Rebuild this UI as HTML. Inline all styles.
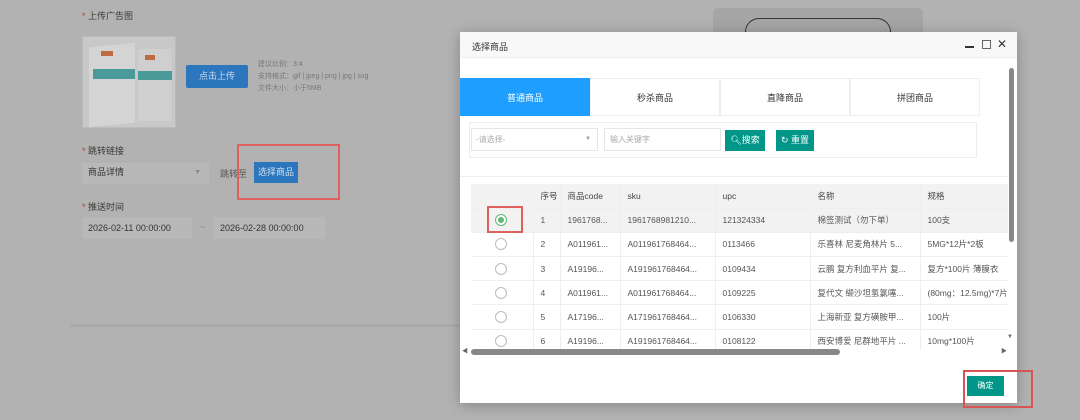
<!DOCTYPE html>
<html><head><meta charset="utf-8"><style>
*{box-sizing:border-box;margin:0;padding:0}
body{width:1080px;height:420px;overflow:hidden;background:#b2b2b2;font-family:"Liberation Sans","Noto Sans CJK SC",sans-serif;position:relative;font-size:9px;color:#333}
.a{position:absolute}
.t{color:#3a3a3a;font-size:9px}
.st{color:#c0392b}
.dlg{left:460px;top:32px;width:557px;height:371px;background:#fff;box-shadow:0 2px 12px rgba(0,0,0,.25)}
.tab{top:46px;height:38px;line-height:38px;text-align:center;border:1px solid #eee;font-size:9px;color:#333;width:130px}
table{border-collapse:collapse;font-size:8.5px;color:#555;table-layout:fixed}
td,th{height:24.2px;border-bottom:1px solid #eee;border-right:1px solid #eee;padding-left:7px;font-weight:normal;text-align:left;white-space:nowrap;overflow:hidden}
th{background:#f2f2f2;color:#444}
.r{width:12px;height:12px;border:1px solid #bbb;border-radius:50%;margin-left:17px;background:#fff}
</style></head><body>
<div class="a t" style="left:82px;top:9px"><span class="st">*</span> 上传广告图</div>
<div class="a" style="left:82px;top:36px;width:94px;height:92px;background:#c8c8c8;border:1px solid #bbb">
 <div class="a" style="left:6px;top:8px;width:46px;height:80px;background:#d4d4d4;transform:skewY(-6deg)"></div>
 <div class="a" style="left:10px;top:32px;width:42px;height:10px;background:#4a9a9a"></div>
 <div class="a" style="left:55px;top:12px;width:34px;height:72px;background:#cfcfcf"></div>
 <div class="a" style="left:55px;top:34px;width:34px;height:9px;background:#4a9a9a"></div>
 <div class="a" style="left:18px;top:14px;width:12px;height:5px;background:#c06a40"></div>
 <div class="a" style="left:62px;top:18px;width:10px;height:5px;background:#c06a40"></div>
</div>
<div class="a" style="left:186px;top:65px;width:62px;height:23px;background:#2b76bd;color:#ccdcec;border-radius:2px;text-align:center;line-height:23px;font-size:9px">点击上传</div>
<div class="a" style="left:258px;top:59px;color:#777;font-size:7px;line-height:12px">建议比例：3:4<br>支持格式：gif | jpeg | png | jpg | svg<br>文件大小：小于5MB</div>
<div class="a t" style="left:82px;top:144px"><span class="st">*</span> 跳转链接</div>
<div class="a" style="left:82px;top:163px;width:127px;height:21px;background:#b8b8b8;color:#333;font-size:9px;padding-left:6px;line-height:19px">商品详情<span style="position:absolute;right:8px;color:#888;font-size:7px">▼</span></div>
<div class="a" style="left:220px;top:167px;color:#555;font-size:9px">跳转至</div>
<div class="a" style="left:254px;top:162px;width:44px;height:21px;background:#2b76bd;color:#d0e0f0;line-height:21px;text-align:center;font-size:9px">选择商品</div>
<div class="a" style="left:237px;top:144px;width:103px;height:56px;border:2px solid #e06060"></div>
<div class="a t" style="left:82px;top:200px"><span class="st">*</span> 推送时间</div>
<div class="a" style="left:82px;top:217px;width:110px;height:22px;background:#b8b8b8;font-size:9px;color:#333;line-height:22px;padding-left:6px">2026-02-11 00:00:00</div>
<div class="a" style="left:200px;top:222px;color:#888">~</div>
<div class="a" style="left:213px;top:217px;width:112px;height:22px;background:#b8b8b8;font-size:9px;color:#333;line-height:22px;padding-left:7px">2026-02-28 00:00:00</div>
<div class="a" style="left:70px;top:324px;width:400px;height:3px;background:#aaa"></div>
<div class="a" style="left:713px;top:8px;width:210px;height:30px;background:#a5a5a5;border-radius:6px"></div>
<div class="a" style="left:745px;top:18px;width:146px;height:30px;border:1.5px solid #333;border-radius:14px"></div>
<div class="a dlg">
 <div class="a" style="left:0;top:0;width:557px;height:26px;background:#f8f8f8;border-bottom:1px solid #eee"></div>
 <div class="a" style="left:12px;top:8px;font-size:9px;color:#333">选择商品</div>
 <div class="a" style="left:505px;top:14px;width:9px;height:1.5px;background:#333"></div>
 <div class="a" style="left:522px;top:8px;width:9px;height:9px;border:1px solid #666"></div>
 <div class="a" style="left:537px;top:5px;font-size:12px;color:#333">✕</div>
 <div class="a tab" style="left:0;background:#1e9fff;color:#fff;border-color:#1e9fff">普通商品</div>
 <div class="a tab" style="left:130px">秒杀商品</div>
 <div class="a tab" style="left:260px">直降商品</div>
 <div class="a tab" style="left:390px">拼团商品</div>
 <div class="a" style="left:9px;top:90px;width:508px;height:36px;border:1px solid #eee"></div>
 <div class="a" style="left:11px;top:96px;width:127px;height:23px;border:1px solid #e6e6e6;color:#aaa;font-size:8px;line-height:21px;padding-left:4px">-请选择-<span style="position:absolute;right:6px;color:#999;font-size:6px">▼</span></div>
 <div class="a" style="left:144px;top:96px;width:117px;height:23px;border:1px solid #e6e6e6;color:#aaa;font-size:8px;line-height:21px;padding-left:5px">输入关键字</div>
 <div class="a" style="left:265px;top:98px;width:40px;height:21px;background:#009688;color:#fff;font-size:9px;line-height:21px;text-align:center">&#x1F50D;&#xFE0E;搜索</div>
 <div class="a" style="left:316px;top:98px;width:38px;height:21px;background:#009688;color:#fff;font-size:9px;line-height:21px;text-align:center">↻ 重置</div>
 <div class="a" style="left:0;top:144px;width:548px;height:1px;background:#eee"></div>
 <div class="a" style="left:11px;top:152px;width:537px;height:166px;overflow:hidden">
 <table style="width:560px">
  <colgroup><col style="width:62px"><col style="width:27px"><col style="width:60px"><col style="width:95px"><col style="width:95px"><col style="width:110px"><col style="width:111px"></colgroup>
  <tr><th></th><th>序号</th><th>商品code</th><th>sku</th><th>upc</th><th>名称</th><th>规格</th></tr>
  <tr style="background:#f2f2f2"><td><div class="r" style="border-color:#5fb878;display:flex;align-items:center;justify-content:center"><div style="width:6px;height:6px;border-radius:50%;background:#5fb878"></div></div></td><td>1</td><td>1961768...</td><td>1961768981210...</td><td>121324334</td><td>棉签测试（勿下单）</td><td>100支</td></tr>
  <tr><td><div class="r"></div></td><td>2</td><td>A011961...</td><td>A011961768464...</td><td>0113466</td><td>乐喜林 尼麦角林片 5...</td><td>5MG*12片*2板</td></tr>
  <tr><td><div class="r"></div></td><td>3</td><td>A19196...</td><td>A191961768464...</td><td>0109434</td><td>云鹏 复方利血平片 复...</td><td>复方*100片 薄膜衣</td></tr>
  <tr><td><div class="r"></div></td><td>4</td><td>A011961...</td><td>A011961768464...</td><td>0109225</td><td>复代文 缬沙坦氢氯噻...</td><td>(80mg：12.5mg)*7片</td></tr>
  <tr><td><div class="r"></div></td><td>5</td><td>A17196...</td><td>A171961768464...</td><td>0106330</td><td>上海新亚 复方磺胺甲...</td><td>100片</td></tr>
  <tr><td><div class="r"></div></td><td>6</td><td>A19196...</td><td>A191961768464...</td><td>0108122</td><td>西安博爱 尼群地平片 ...</td><td>10mg*100片</td></tr>
 </table></div>
 <div class="a" style="left:11px;top:317px;width:369px;height:6px;background:#888;border-radius:3px"></div>
 <div class="a" style="left:2px;top:314px;font-size:6px;color:#666">◀</div>
 <div class="a" style="left:541px;top:314px;font-size:6px;color:#666">▶</div>
 <div class="a" style="left:549px;top:36px;width:5px;height:174px;background:#888;border-radius:3px"></div>
 <div class="a" style="left:547px;top:302px;font-size:6px;color:#666">▼</div>
 <div class="a" style="left:507px;top:344px;width:37px;height:20px;background:#009688;color:#fff;font-size:8px;line-height:20px;text-align:center">确定</div>
</div>
<div class="a" style="left:487px;top:206px;width:36px;height:27px;border:2px solid #e06060"></div>
<div class="a" style="left:963px;top:370px;width:70px;height:38px;border:2px solid #d95555"></div>
</body></html>
